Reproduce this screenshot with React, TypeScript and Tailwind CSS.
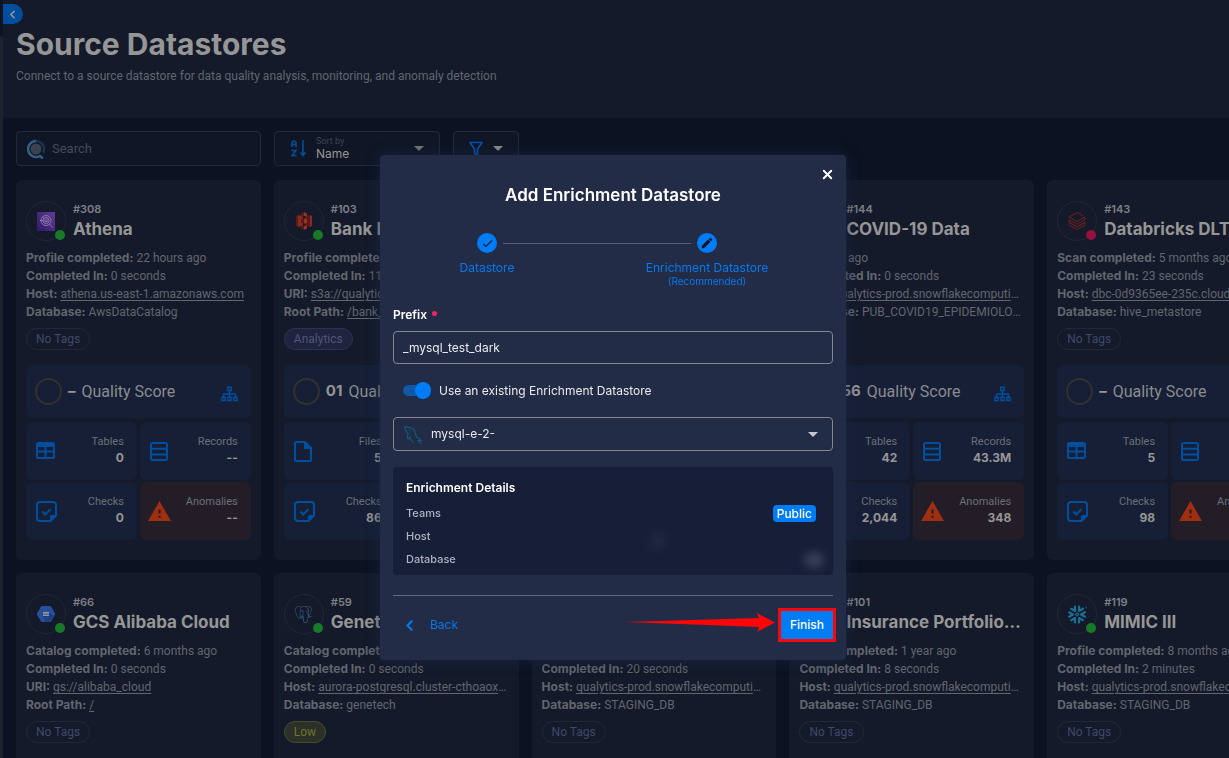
import type { ReactNode } from "react";
import { MdCheck, MdEdit, MdWarning } from "react-icons/md";
import { SiDatabricks, SiPostgresql, SiSnowflake } from "react-icons/si";
import { TbBrandMysql } from "react-icons/tb";
import { FiChevronLeft, FiX } from "react-icons/fi";

type Detail = { label: string; value: string; link?: boolean };

type Datastore = {
  id: string;
  name: string;
  logo: ReactNode;
  failed?: boolean;
  details: Detail[];
  tag: string;
  tagClass?: string;
  score: string;
  files?: boolean;
  tables: string;
  records: string;
  checks: string;
  anomalies: string;
};

function AthenaLogo() {
  return (
    <svg width="18" height="19" viewBox="0 0 18 19" fill="none">
      <defs>
        <linearGradient id="athena" x1="0" y1="1" x2="1" y2="0">
          <stop stopColor="#2f1968" />
          <stop offset="1" stopColor="#633b94" />
        </linearGradient>
      </defs>
      <rect width="18" height="19" fill="url(#athena)" />
      <g stroke="#8c7aaa" strokeWidth="1">
        <circle cx="9" cy="8.5" r="5" />
        <circle cx="9" cy="8.5" r="3" />
        <path d="M3 8.5h3M5 5l2 1.500M7 8h4M7.500 9.500h3M12.500 12l3 3.500" />
      </g>
    </svg>
  );
}

function S3Logo() {
  return (
    <svg width="16" height="18" viewBox="0 0 16 18">
      <path d="M0 4l2-1v12l-2-1z" fill="#5c1a17" />
      <path d="M2 3l5 1.500v9L2 15z" fill="#8a2a22" />
      <path d="M16 4l-2-1v12l2-1z" fill="#8a2a22" />
      <path d="M14 3L9 4.500v9l5 1.500z" fill="#5c1a17" />
      <path d="M8 0l3 1.500v3L8 4zM8 6.500l3 .4v4L8 11.400zM8 14l3-.600v3L8 18z" fill="#9a3127" />
      <path d="M8 0L5 1.500v3L8 4zM8 6.500l-3 .4v4l3 .5zM8 14l-3-.600v3L8 18z" fill="#5c1a17" />
    </svg>
  );
}

function GcsLogo() {
  return (
    <svg width="18" height="16" viewBox="0 0 18 16">
      <path d="M5 0h8l1 .5L18 7.200v1.600l-4 6.700-1 .5H5l-1-.5L0 8.800V7.200L4 .5z" fill="#274f9b" />
      <path d="M12 6.200l5 4-3 5.300-1 .5H8.500L6 10z" fill="#1f4183" />
      <path d="M6 6h6v1.700H6zM6 8.400h6V10H6z" fill="#94969c" />
    </svg>
  );
}

function SitemapIcon() {
  return (
    <svg width="17" height="16" viewBox="0 0 17 16" fill="none" stroke="#004f9e" strokeWidth="1.5">
      <path d="M6.700 1.200h3.500v3.300H6.700zM1 11.200h3.200v3.300H1zM6.900 11.200h3.200v3.300H6.900zM12.800 11.200H16v3.300h-3.200z" />
      <path d="M8.500 4.500v6.700M2.600 11.200V8h11.800v3.200" />
    </svg>
  );
}

function TableIcon() {
  return (
    <svg width="19" height="18" viewBox="0 0 19 18">
      <path
        fillRule="evenodd"
        fill="#004f9e"
        d="M2 0h15a2 2 0 0 1 2 2v13a2 2 0 0 1-2 2H2a2 2 0 0 1-2-2V2a2 2 0 0 1 2-2zM2 5v3.500h6.500V5zM10.500 5v3.500H17V5zM2 10.500V15h6.500v-4.500zM10.500 10.500V15H17v-4.500z"
      />
    </svg>
  );
}

function RecordsIcon() {
  return (
    <svg width="18" height="19" viewBox="0 0 18 19" fill="none" stroke="#004f9e" strokeWidth="2">
      <rect x="1" y="1" width="16" height="17" rx="1.500" />
      <path d="M1 6.700h16M1 12.500h16" />
    </svg>
  );
}

function FileIcon() {
  return (
    <svg width="18" height="21" viewBox="0 0 18 21">
      <path
        fillRule="evenodd"
        fill="#004f9e"
        d="M2 0h9.500L18 6.500V19a2 2 0 0 1-2 2H2a2 2 0 0 1-2-2V2a2 2 0 0 1 2-2zM2 2v17h14V8h-6V2z"
      />
    </svg>
  );
}

function ChecksIcon() {
  return (
    <svg width="21" height="21" viewBox="0 0 21 21">
      <path
        d="M4 1h13a3 3 0 0 1 3 3v10.500L14.500 20H4a3 3 0 0 1-3-3V4a3 3 0 0 1 3-3z"
        fill="none"
        stroke="#004f9e"
        strokeWidth="2"
      />
      <path d="M14 20v-4.500A1.500 1.500 0 0 1 15.500 14H20z" fill="#004f9e" />
      <path d="M6.300 10.500l2.900 3 5.200-5.300" fill="none" stroke="#004f9e" strokeWidth="2" />
    </svg>
  );
}

function Caret({ className }: { className?: string }) {
  return (
    <svg width="10" height="5" viewBox="0 0 10 5" className={className}>
      <path d="M0 0h10L5 5z" fill="currentColor" />
    </svg>
  );
}

const snowflake = <SiSnowflake size={19} color="#1c6d93" />;
const snowflakeHost = { label: "Host:", value: "qualytics-prod.snowflakecomputing.com", link: true };

const datastores: Datastore[] = [
  {
    id: "#308",
    name: "Athena",
    logo: <AthenaLogo />,
    details: [
      { label: "Profile completed:", value: "22 hours ago" },
      { label: "Completed In:", value: "0 seconds" },
      { label: "Host:", value: "athena.us-east-1.amazonaws.com", link: true },
      { label: "Database:", value: "AwsDataCatalog" },
    ],
    tag: "No Tags",
    score: "–",
    tables: "0",
    records: "--",
    checks: "0",
    anomalies: "--",
  },
  {
    id: "#103",
    name: "Bank Dataset",
    logo: <S3Logo />,
    details: [
      { label: "Profile completed:", value: "1 year ago" },
      { label: "Completed In:", value: "11 seconds" },
      { label: "URI:", value: "s3a://qualytics-demo", link: true },
      { label: "Root Path:", value: "/bank_dataset", link: true },
    ],
    tag: "Analytics",
    tagClass: "border-[#2e3154] bg-[#20233d] text-[#50557d]",
    score: "01",
    files: true,
    tables: "5",
    records: "--",
    checks: "86",
    anomalies: "--",
  },
  {
    id: "#102",
    name: "Snowflake",
    logo: snowflake,
    details: [
      { label: "Scan:", value: "1m ago" },
      { label: "Completed In:", value: "0 seconds" },
      { label: "Host:", value: "qualytics-prod", link: true },
      { label: "Database:", value: "STAGING_DB" },
    ],
    tag: "No Tags",
    score: "–",
    tables: "0",
    records: "--",
    checks: "0",
    anomalies: "--",
  },
  {
    id: "#144",
    name: "COVID-19 Data",
    logo: snowflake,
    details: [
      { label: "Ran:", value: "1 h ago" },
      { label: "Completed In:", value: "0 seconds" },
      snowflakeHost,
      { label: "Database:", value: "PUB_COVID19_EPIDEMIOLOGICAL" },
    ],
    tag: "Low",
    tagClass: "border-[#474c28] bg-[#2b3129] text-[#70742c]",
    score: "56",
    tables: "42",
    records: "43.3M",
    checks: "2,044",
    anomalies: "348",
  },
  {
    id: "#143",
    name: "Databricks DLT",
    logo: <SiDatabricks size={18} color="#7c201d" />,
    failed: true,
    details: [
      { label: "Scan completed:", value: "5 months ago" },
      { label: "Completed In:", value: "23 seconds" },
      { label: "Host:", value: "dbc-0d9365ee-235c.cloud.databricks.com", link: true },
      { label: "Database:", value: "hive_metastore" },
    ],
    tag: "No Tags",
    score: "–",
    tables: "5",
    records: "--",
    checks: "98",
    anomalies: "--",
  },
  {
    id: "#66",
    name: "GCS Alibaba Cloud",
    logo: <GcsLogo />,
    details: [
      { label: "Catalog completed:", value: "6 months ago" },
      { label: "Completed In:", value: "0 seconds" },
      { label: "URI:", value: "gs://alibaba_cloud", link: true },
      { label: "Root Path:", value: "/", link: true },
    ],
    tag: "No Tags",
    score: "–",
    tables: "0",
    records: "--",
    checks: "0",
    anomalies: "--",
  },
  {
    id: "#59",
    name: "Genetech",
    logo: <SiPostgresql size={17} color="#35628a" />,
    details: [
      { label: "Catalog completed:", value: "1 year ago" },
      { label: "Completed In:", value: "0 seconds" },
      { label: "Host:", value: "aurora-postgresql.cluster-cthoaoxeayrd", link: true },
      { label: "Database:", value: "genetech" },
    ],
    tag: "Low",
    tagClass: "border-[#474c28] bg-[#2b3129] text-[#70742c]",
    score: "–",
    tables: "0",
    records: "--",
    checks: "0",
    anomalies: "--",
  },
  {
    id: "#100",
    name: "Staging",
    logo: snowflake,
    details: [
      { label: "Profile completed:", value: "1 year ago" },
      { label: "Completed In:", value: "20 seconds" },
      snowflakeHost,
      { label: "Database:", value: "STAGING_DB" },
    ],
    tag: "No Tags",
    score: "–",
    tables: "0",
    records: "--",
    checks: "0",
    anomalies: "--",
  },
  {
    id: "#101",
    name: "Insurance Portfolio Data",
    logo: snowflake,
    details: [
      { label: "Scan completed:", value: "1 year ago" },
      { label: "Completed In:", value: "8 seconds" },
      snowflakeHost,
      { label: "Database:", value: "STAGING_DB" },
    ],
    tag: "No Tags",
    score: "–",
    tables: "0",
    records: "--",
    checks: "0",
    anomalies: "--",
  },
  {
    id: "#119",
    name: "MIMIC III",
    logo: snowflake,
    details: [
      { label: "Profile completed:", value: "8 months ago" },
      { label: "Completed In:", value: "2 minutes" },
      snowflakeHost,
      { label: "Database:", value: "STAGING_DB" },
    ],
    tag: "No Tags",
    score: "–",
    tables: "0",
    records: "--",
    checks: "0",
    anomalies: "--",
  },
];

function Stat({
  icon,
  label,
  value,
  alert,
}: {
  icon: ReactNode;
  label: string;
  value: string;
  alert?: boolean;
}) {
  return (
    <div
      className={
        alert
          ? "flex h-[58px] items-center justify-between rounded-md bg-[#231d27] pl-[7px] pr-[13px]"
          : "flex h-[58px] items-center justify-between rounded-md bg-[#161f35] pl-[10px] pr-[13px]"
      }
    >
      {icon}
      <div className="pb-[2px] text-right">
        <div className="text-[11px] leading-4 text-[#6b6f78]">{label}</div>
        <div className="font-[Inter] text-xs leading-4 font-bold text-[#969696]">{value}</div>
      </div>
    </div>
  );
}

function DatastoreCard({ store }: { store: Datastore }) {
  return (
    <article className="min-w-0 rounded-md bg-[#141a29] px-[10px] pt-[21px] pb-5">
      <div className="flex gap-[7px]">
        <div className="relative flex size-10 shrink-0 items-center justify-center rounded-full border border-[#212735]">
          {store.logo}
          <span
            className={
              store.failed
                ? "absolute right-0 bottom-0 size-[10px] rounded-full bg-[#94113f]"
                : "absolute right-0 bottom-0 size-[10px] rounded-full bg-[#187a29]"
            }
          />
        </div>
        <div className="min-w-0 font-[Inter]">
          <div className="text-[11px] leading-4 font-semibold text-[#7d8087]">{store.id}</div>
          <h2 className="truncate text-[17px] leading-6 font-bold text-[#969696]">{store.name}</h2>
        </div>
      </div>
      <dl className="mt-2 text-xs leading-[18px] text-[#62666f]">
        {store.details.map((detail) => (
          <div key={detail.label} className="h-[18px] truncate">
            <dt className="inline font-[Inter] font-bold">{detail.label}</dt>{" "}
            <dd className="inline">
              {detail.link ? (
                <a href="#" className="underline underline-offset-2">
                  {detail.value}
                </a>
              ) : (
                detail.value
              )}
            </dd>
          </div>
        ))}
      </dl>
      <div
        className={`mt-[7px] flex h-[22px] w-fit items-center rounded-full border px-[9px] text-xs ${
          store.tagClass ?? "border-[#222838] text-[#3f496b]"
        }`}
      >
        {store.tag}
      </div>
      <div className="mt-[15px] flex h-[53px] items-center rounded-md bg-[#161f35] pl-[9px] pr-[13px]">
        <span className="size-[27px] shrink-0 rounded-full border-2 border-[#33322f]" />
        <span className="ml-[6px] font-[Inter] text-[15px] font-bold text-[#969696]">{store.score}</span>
        <span className="ml-[6px] text-base text-[#8a8c90]">Quality Score</span>
        <button type="button" aria-label="View lineage" className="mt-1 ml-auto">
          <SitemapIcon />
        </button>
      </div>
      <div className="mt-1 grid grid-cols-2 gap-x-[3px] gap-y-[2px]">
        <Stat
          icon={store.files ? <FileIcon /> : <TableIcon />}
          label={store.files ? "Files" : "Tables"}
          value={store.tables}
        />
        <Stat icon={<RecordsIcon />} label="Records" value={store.records} />
        <Stat icon={<ChecksIcon />} label="Checks" value={store.checks} />
        <Stat
          icon={<MdWarning size={25} color="#a02f12" />}
          label="Anomalies"
          value={store.anomalies}
          alert
        />
      </div>
    </article>
  );
}

function Toolbar() {
  return (
    <div className="flex gap-[13px]">
      <label className="flex h-[35px] w-[245px] items-center gap-[7px] rounded-sm border border-[#252a37] bg-[#101625] px-[10px]">
        <svg width="18" height="20" viewBox="0 0 18 20" fill="none">
          <circle cx="9" cy="10" r="5.500" fill="#3b4250" />
          <path d="M9 2a8 8 0 0 1 7 12" stroke="#16344c" strokeWidth="2.500" />
          <path d="M9 2a8 8 0 1 0 4 15l3 2.500" stroke="#315f83" strokeWidth="2.500" />
        </svg>
        <input
          type="text"
          aria-label="Search"
          placeholder="Search"
          className="min-w-0 flex-1 bg-transparent text-[13px] outline-none placeholder:text-[#454a56]"
        />
      </label>
      <div className="relative flex h-[35px] w-[166px] items-center rounded-sm border border-[#252a37] bg-[#101625] pl-4">
        <svg width="16" height="17" viewBox="0 0 16 17" fill="none" stroke="#004f9e" strokeWidth="1.6">
          <path d="M1 7V2.500L2.500 1h1L5 2.500V7M1 4.500h4M.5 10.500h4.500L1 15.500h4.500M12 0v15M9.500 12.500L12 15.500l2.500-3" />
        </svg>
        <div className="ml-[9px] flex flex-1 flex-col">
          <label htmlFor="sort" className="text-[9px] leading-[10px] text-[#3f4450]">
            Sort by
          </label>
          <select
            id="sort"
            className="h-4 w-full appearance-none bg-transparent font-[Inter] text-xs leading-4 text-[#969696] outline-none"
          >
            <option>Name</option>
          </select>
        </div>
        <Caret className="pointer-events-none absolute right-[15px] text-[#74767b]" />
      </div>
      <button
        type="button"
        aria-label="Filter"
        className="flex h-[35px] w-[66px] items-center justify-center gap-[10px] rounded-sm border border-[#252a37] bg-[#101625]"
      >
        <svg width="14" height="16" viewBox="0 0 14 16" fill="none" stroke="#0054ab" strokeWidth="1.7">
          <path d="M1 1.500h12L8.500 8v6.500L5.500 12V8z" />
        </svg>
        <Caret className="text-[#8d8f93]" />
      </button>
    </div>
  );
}

function Step({ icon, title, note, last }: { icon: ReactNode; title: string; note?: string; last?: boolean }) {
  return (
    <li className="flex flex-col items-center text-xs text-[#0579ed]">
      <div className="flex w-full items-center gap-[6px]">
        <span className={last ? "h-px flex-1 bg-[#57607a]" : "flex-1"} />
        <span className="flex size-5 items-center justify-center rounded-full bg-[#007df5] text-[#0b1122]">
          {icon}
        </span>
        <span className={last ? "flex-1" : "h-px flex-1 bg-[#57607a]"} />
      </div>
      <span className="mt-[7px] leading-4">{title}</span>
      {note && <span className="text-[10px] leading-[10px]">{note}</span>}
    </li>
  );
}

function EnrichmentDialog() {
  return (
    <div className="fixed inset-0 flex items-start justify-center pt-[155px] pr-[3px] font-[Inter]">
      <div
        role="dialog"
        aria-labelledby="dialog-title"
        className="w-[466px] rounded-sm bg-[#232c46] px-[13px] pt-[11px] pb-[18px] text-white shadow-[0_0_14px_rgba(24,40,72,0.7)]"
      >
        <div className="flex justify-end">
          <button type="button" aria-label="Close" className="flex h-4 w-3 items-center justify-center">
            <FiX size={15} className="shrink-0" strokeWidth={3} />
          </button>
        </div>
        <h1 id="dialog-title" className="mt-px text-center text-[17px] leading-6 font-semibold">
          Add Enrichment Datastore
        </h1>
        <ol className="mt-[26px] mr-4 -ml-4 grid grid-cols-2">
          <Step icon={<MdCheck size={13} />} title="Datastore" />
          <Step icon={<MdEdit size={14} />} title="Enrichment Datastore" note="(Recommended)" last />
        </ol>

        <label htmlFor="prefix" className="mt-[21px] flex items-center gap-[5px] text-xs leading-4 font-semibold">
          Prefix
          <span className="mb-1 size-[5px] rounded-full bg-[#f5235d]" />
        </label>
        <input
          id="prefix"
          type="text"
          defaultValue="_mysql_test_dark"
          className="mt-2 h-[33px] w-full rounded-sm border border-[#85878c] bg-transparent px-[9px] text-xs text-[#e9eaed] outline-none"
        />

        <label className="mt-[18px] ml-[10px] flex items-center gap-2 text-xs leading-[17px] text-[#e9eaed]">
          <input type="checkbox" defaultChecked className="peer sr-only" />
          <span className="flex w-[28px] items-center">
            <span className="h-[11px] w-[13px] rounded-l-full bg-[#1258a8]" />
            <span className="-ml-px size-[17px] rounded-full bg-[#007df5]" />
          </span>
          Use an existing Enrichment Datastore
        </label>

        <div className="relative mt-[18px] flex items-center">
          <TbBrandMysql
            size={21}
            strokeWidth={1.2}
            className="pointer-events-none absolute left-[9px] text-[#0d6385]"
          />
          <select
            aria-label="Enrichment datastore"
            className="h-[34px] w-full appearance-none rounded-sm border border-[#85878c] bg-transparent pl-[37px] text-xs text-[#e9eaed] outline-none"
          >
            <option>mysql-e-2-</option>
          </select>
          <Caret className="pointer-events-none absolute right-[15px] text-[#c5c8d0]" />
        </div>

        <section className="mt-4 rounded-sm bg-[#161e38] px-[13px] pt-3 pb-1">
          <h2 className="text-xs leading-[18px] font-semibold">Enrichment Details</h2>
          <dl className="mt-[5px] text-[11px] leading-[23px] font-medium text-[#b0b4bf]">
            <div className="flex items-center justify-between">
              <dt>Teams</dt>
              <dd className="mr-1 rounded-sm bg-[#007df5] px-1 text-xs leading-[17px] text-white">Public</dd>
            </div>
            <div className="flex h-[23px] justify-between">
              <dt>Host</dt>
              <dd className="mt-2 mr-[154px] size-4 rounded-full bg-[#232a43] blur-[5px]" />
            </div>
            <div className="flex h-[23px] justify-between">
              <dt>Database</dt>
              <dd className="mt-1 -mr-1 h-4 w-5 rounded-full bg-[#3b4058] blur-[5px]" />
            </div>
          </dl>
        </section>

        <footer className="mt-5 flex items-center justify-between border-t border-[#626a7f] pt-3">
          <button type="button" className="ml-2 flex items-center gap-2 text-xs text-[#0579ed]">
            <FiChevronLeft size={17} strokeWidth={3} />
            <span className="ml-1">Back</span>
          </button>
          <div className="-mr-[3px] flex items-center gap-[3px]">
            <svg width="150" height="20" viewBox="0 0 150 20" className="mb-1">
              <path d="M0 9l134-4-2-5 18 9.500L132 19l2-5z" fill="#fb0606" />
            </svg>
            <button
              type="button"
              className="h-[34px] w-[58px] border-[3px] border-[#fb0606] bg-[#007df5] text-xs font-medium"
            >
              Finish
            </button>
          </div>
        </footer>
      </div>
    </div>
  );
}

export default function App() {
  return (
    <div className="flex h-screen overflow-hidden bg-[#0c1221] font-[Roboto,sans-serif] text-[#969696]">
      <div className="w-[3px] shrink-0 bg-[#0d1322] pt-9">
        <div className="h-full rounded-tr-sm bg-[#20232f]" />
      </div>
      <main className="min-w-0 flex-1">
        <header className="h-[118px] bg-[#141a29] pt-1">
          <button
            type="button"
            aria-label="Collapse menu"
            className="flex h-5 w-5 items-center rounded-r-full bg-[#004f9e] pl-[3px]"
          >
            <FiChevronLeft size={13} strokeWidth={3} />
          </button>
          <div className="px-[13px]">
            <h1 className="font-[Inter] text-[30px] leading-10 font-bold text-[#969696]">Source Datastores</h1>
            <p className="mt-[3px] text-xs leading-[18px] text-[#62666f]">
              Connect to a source datastore for data quality analysis, monitoring, and anomaly detection
            </p>
          </div>
        </header>
        <div className="px-[13px] pt-[13px]">
          <Toolbar />
          <div className="mt-[14px] grid w-[calc(100%+76px)] grid-cols-5 gap-[13px]">
            {datastores.map((store) => (
              <DatastoreCard key={store.id} store={store} />
            ))}
          </div>
        </div>
      </main>
      <EnrichmentDialog />
    </div>
  );
}
